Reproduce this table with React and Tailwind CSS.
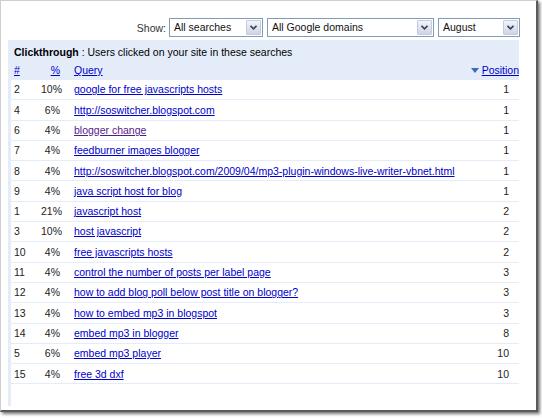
import React from 'react';

const rows = [
  { n: 2, pct: '10%', q: 'google for free javascripts hosts', pos: 1 },
  { n: 4, pct: '6%', q: 'http://soswitcher.blogspot.com', pos: 1 },
  { n: 6, pct: '4%', q: 'blogger change', pos: 1, visited: true },
  { n: 7, pct: '4%', q: 'feedburner images blogger', pos: 1 },
  { n: 8, pct: '4%', q: 'http://soswitcher.blogspot.com/2009/04/mp3-plugin-windows-live-writer-vbnet.html', pos: 1 },
  { n: 9, pct: '4%', q: 'java script host for blog', pos: 1 },
  { n: 1, pct: '21%', q: 'javascript host', pos: 2 },
  { n: 3, pct: '10%', q: 'host javascript', pos: 2 },
  { n: 10, pct: '4%', q: 'free javascripts hosts', pos: 2 },
  { n: 11, pct: '4%', q: 'control the number of posts per label page', pos: 3 },
  { n: 12, pct: '4%', q: 'how to add blog poll below post title on blogger?', pos: 3 },
  { n: 13, pct: '4%', q: 'how to embed mp3 in blogspot', pos: 3 },
  { n: 14, pct: '4%', q: 'embed mp3 in blogger', pos: 8 },
  { n: 5, pct: '6%', q: 'embed mp3 player', pos: 10 },
  { n: 15, pct: '4%', q: 'free 3d dxf', pos: 10 },
];

function Select({ label, width }) {
  return (
    <div className={`flex items-center h-[19px] border border-[#7f9db9] bg-white ${width}`}>
      <span className="flex-1 pl-[4px] text-[#111] truncate">{label}</span>
      <span className="w-[15px] h-[15px] mr-[1px] flex items-center justify-center border border-[#c3cbdc] rounded-[1px] bg-gradient-to-b from-[#f2f4fa] to-[#cfd5e6]">
        <svg width="7" height="5" viewBox="0 0 7 5">
          <path d="M0.5 0.8 L3.5 3.8 L6.5 0.8" fill="none" stroke="#3a3f55" strokeWidth="1.6" />
        </svg>
      </span>
    </div>
  );
}

export default function App() {
  return (
    <div className="w-[542px] h-[418px] bg-white font-['Liberation_Sans',Arial,sans-serif] text-[10.5px] leading-none">
      <div className="w-[538px] h-[412px] border-l border-t border-[#cfcfcf] border-r-2 border-b-2 border-r-[#5a5a5a] border-b-[#5a5a5a] shadow-[2px_2px_3px_rgba(0,0,0,0.55)] bg-white flex flex-col">
        <div className="flex justify-end items-center pt-[17px] pr-[16px] gap-[4px]">
          <span className="text-[#333] mr-[-1px] pt-[2px]">Show:</span>
          <Select label="All searches" width="w-[94px]" />
          <Select label="All Google domains" width="w-[167px]" />
          <Select label="August" width="w-[82px]" />
        </div>
        <div className="ml-[7px] mt-[3px] w-[511px] bg-[#e5ecf9] pl-[3px] flex flex-col">
          <div className="h-[21px] flex items-center pt-[3px] pl-[3px] text-black">
            <b>Clickthrough</b>&nbsp;: Users clicked on your site in these searches
          </div>
          <div className="h-[19px] flex items-center">
            <span className="w-[30px] pl-[3px]"><a className="text-[#0000cc] underline">#</a></span>
            <span className="w-[19px] text-right"><a className="text-[#0000cc] underline">%</a></span>
            <span className="flex-1 pl-[14px]"><a className="text-[#0000cc] underline">Query</a></span>
            <span className="flex items-center gap-[3px]">
              <svg width="8" height="5" viewBox="0 0 8 5"><path d="M0 0 H8 L4 5 Z" fill="#3d6cb5" /></svg>
              <a className="text-[#0000cc] underline">Position</a>
            </span>
          </div>
          <div className="bg-white h-[326px]">
            {rows.map((r) => (
              <div key={r.n} className="h-[20.3px] flex items-center border-b border-[#e5ecf9] text-[#222]">
                <span className="w-[30px] pl-[3px]">{r.n}</span>
                <span className="w-[19px] text-right">{r.pct}</span>
                <span className="flex-1 pl-[14px]">
                  <a className={`underline ${r.visited ? 'text-[#551a8b]' : 'text-[#0000cc]'}`}>{r.q}</a>
                </span>
                <span className="w-[40px] text-right pr-[10px]">{r.pos}</span>
              </div>
            ))}
          </div>
        </div>
      </div>
    </div>
  );
}
